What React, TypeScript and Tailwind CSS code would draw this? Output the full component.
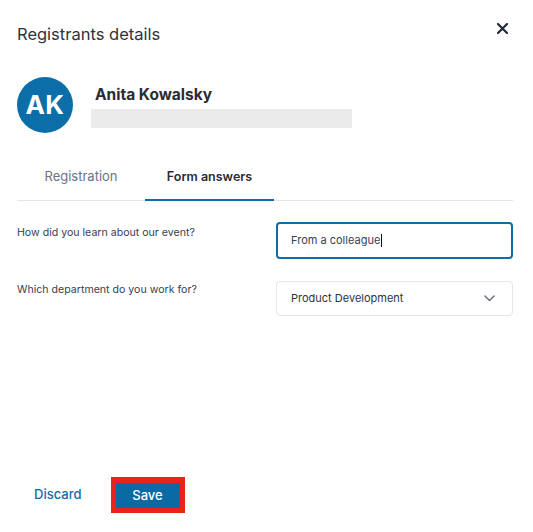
import React from "react";

export default function App() {
  return (
    <div className="w-[533px] h-[532px] bg-white font-['Inter','Liberation_Sans',sans-serif] flex flex-col pl-[17px] pr-[20px] overflow-hidden">
      {/* Header */}
      <div className="flex items-start justify-between pt-[24px]">
        <h1 className="text-[16.5px] leading-[20px] text-[#2d3440] font-normal">Registrants details</h1>
        <button className="mr-[5px] mt-[-1px] p-0" aria-label="Close">
          <svg width="11" height="11" viewBox="0 0 11 11" className="block">
            <path d="M1 1L10 10M10 1L1 10" stroke="#1f2937" strokeWidth="2.2" strokeLinecap="round" />
          </svg>
        </button>
      </div>

      {/* Person */}
      <div className="flex items-start mt-[33px]">
        <div className="w-[56px] h-[56px] rounded-full bg-[#0b6ea8] flex items-center justify-center text-white text-[26px] font-bold leading-none tracking-[0.5px]">
          AK
        </div>
        <div className="ml-[18px] mt-[8px] flex flex-col">
          <div className="ml-[4px] text-[15.5px] leading-[20px] font-bold text-[#272c36]">Anita Kowalsky</div>
          <div className="mt-[4px] w-[261px] h-[19px] bg-[#ebebeb]" />
        </div>
      </div>

      {/* Tabs */}
      <div className="mt-[22px] flex border-b border-[#e4e6eb]">
        <div className="w-[128px] h-[46px] -mb-px flex items-center justify-center text-[13px] text-[#6b7280] border-b-2 border-transparent">
          Registration
        </div>
        <div className="w-[129px] h-[46px] -mb-px flex items-center justify-center text-[12.5px] font-semibold text-[#272c36] border-b-2 border-[#0b6ea8]">
          Form answers
        </div>
      </div>

      {/* Rows */}
      <div className="mt-[21px] flex items-start">
        <div className="w-[259px] pt-[4px] text-[10.6px] leading-[14px] text-[#374151]">How did you learn about our event?</div>
        <div className="flex-1 h-[37px] border-2 border-[#0b6ea8] rounded-[4px] flex items-center pl-[13px] text-[11px] text-[#374151]">
          <span>From a colleague</span>
          <span className="inline-block w-px h-[13px] bg-[#111] ml-[1px]" />
        </div>
      </div>

      <div className="mt-[22px] flex items-start">
        <div className="w-[259px] pt-[2px] text-[10.6px] leading-[14px] text-[#374151]">Which department do you work for?</div>
        <div className="flex-1 h-[35px] border border-[#e4e6eb] rounded-[4px] flex items-center justify-between pl-[14px] pr-[17px] text-[11px] text-[#2d3440]">
          <span>Product Development</span>
          <svg width="11" height="7" viewBox="0 0 11 7" className="block">
            <path d="M1 1L5.5 5.5L10 1" stroke="#6b7280" strokeWidth="1.5" fill="none" strokeLinecap="round" strokeLinejoin="round" />
          </svg>
        </div>
      </div>

      {/* Footer */}
      <div className="mt-auto mb-[19px] flex items-center">
        <button className="ml-[17px] text-[13px] font-medium text-[#0b6ea8]">Discard</button>
        <div className="ml-[29px] bg-[#e8221d] px-[5px] pt-[6px] pb-[5px]">
          <button className="w-[64px] h-[25px] bg-[#0b6aa3] text-white text-[13px] font-medium flex items-center justify-center">
            Save
          </button>
        </div>
      </div>
    </div>
  );
}
